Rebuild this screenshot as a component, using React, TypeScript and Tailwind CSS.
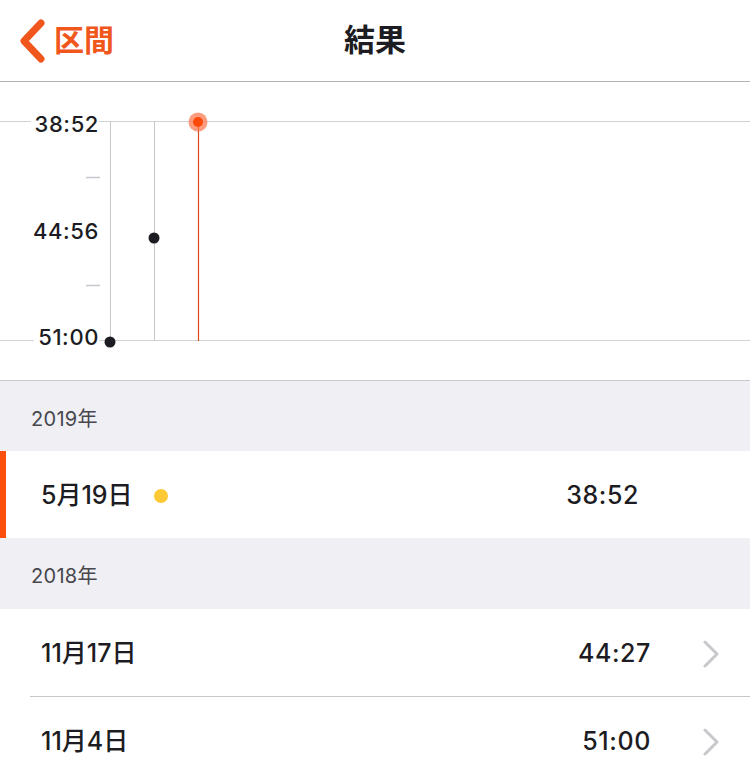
import React from "react";

const font = { fontFamily: 'Inter, "Noto Sans CJK JP", sans-serif' };

const Chevron = () => (
  <svg width="18" height="28" viewBox="0 0 18 28" className="shrink-0">
    <path d="M3 2 L15 14 L3 26" fill="none" stroke="#c7c7cc" strokeWidth="3" strokeLinecap="round" strokeLinejoin="round" />
  </svg>
);

const Chart = () => (
  <div className="relative h-[299px] border-b border-[#c8c7cc] bg-white">
    <svg className="absolute inset-0" width="750" height="299">
      <line x1="0" y1="39.5" x2="750" y2="39.5" stroke="#d1d1d6" strokeWidth="1" />
      <line x1="0" y1="258.5" x2="750" y2="258.5" stroke="#d1d1d6" strokeWidth="1" />
      <line x1="110.5" y1="39" x2="110.5" y2="259" stroke="#c7c7cc" strokeWidth="1" />
      <line x1="154.5" y1="39" x2="154.5" y2="259" stroke="#c7c7cc" strokeWidth="1" />
      <line x1="198.5" y1="40" x2="198.5" y2="259" stroke="#d9471a" strokeWidth="1.2" />
      <line x1="86" y1="95.5" x2="100" y2="95.5" stroke="#c7c7cc" strokeWidth="1.5" />
      <line x1="86" y1="203.5" x2="100" y2="203.5" stroke="#c7c7cc" strokeWidth="1.5" />
      <circle cx="110" cy="260" r="5.5" fill="#1c1c22" />
      <circle cx="154" cy="156" r="5.5" fill="#1c1c22" />
      <circle cx="198" cy="40" r="9.5" fill="#fb7a52" opacity="0.75" />
      <circle cx="198" cy="40" r="5" fill="#fc4a0a" />
    </svg>
    <span className="absolute right-[651px] top-[28px] bg-white pl-1 text-[22px] font-medium leading-[28px] tracking-[0.6px] text-[#1c1c22]">38:52</span>
    <span className="absolute right-[651px] top-[135px] bg-white pl-1 text-[22px] font-medium leading-[28px] tracking-[0.6px] text-[#1c1c22]">44:56</span>
    <span className="absolute right-[651px] top-[241px] bg-white pl-1 text-[22px] font-medium leading-[28px] tracking-[0.6px] text-[#1c1c22]">51:00</span>
  </div>
);

const SectionHeader = ({ label, h }: { label: string; h: string }) => (
  <div className={`flex items-center bg-[#efeff4] pl-[31px] pt-[5px] ${h}`}>
    <span className="text-[20px] leading-none tracking-[0.3px] text-[#47474d]">{label}</span>
  </div>
);

const Row = ({ date, time }: { date: string; time: string }) => (
  <div className="flex h-[87px] items-center bg-white pl-[41px] pr-[30px] pt-[3px]">
    <span className="text-[25px] font-medium text-[#1c1c22]">{date}</span>
    <span className="ml-auto text-[25px] font-medium tracking-[0.6px] text-[#1c1c22]">{time}</span>
    <div className="ml-[51px]">
      <Chevron />
    </div>
  </div>
);

export default function App() {
  return (
    <div className="h-[765px] w-[750px] overflow-hidden bg-white" style={font}>
      <header className="relative flex h-[82px] items-center border-b border-[#b2b2b2] bg-white">
        <div className="flex items-center pl-[17px]">
          <svg width="30" height="46" viewBox="0 0 30 46">
            <path d="M24 5 L7 23 L24 41" fill="none" stroke="#f1561c" strokeWidth="7" strokeLinecap="round" strokeLinejoin="round" />
          </svg>
          <span className="ml-[7px] text-[30px] font-semibold text-[#f1561c]">区間</span>
        </div>
        <h1 className="absolute left-1/2 -translate-x-1/2 text-[31px] font-bold text-[#1c1c22]">結果</h1>
      </header>

      <Chart />

      <SectionHeader label="2019年" h="h-[70px]" />
      <div className="flex h-[87px] items-center border-l-[6px] border-[#fc4f0e] bg-white pl-[35px] pt-[3px]">
        <span className="text-[25px] font-medium text-[#1c1c22]">5月19日</span>
        <span className="ml-[21px] h-[14px] w-[14px] rounded-full bg-[#fdc934]" />
        <span className="ml-auto mr-[111px] text-[25px] font-medium tracking-[0.6px] text-[#1c1c22]">38:52</span>
      </div>

      <SectionHeader label="2018年" h="h-[71px]" />
      <Row date="11月17日" time="44:27" />
      <div className="ml-[30px] h-px bg-[#c8c7cc]" />
      <Row date="11月4日" time="51:00" />
    </div>
  );
}
